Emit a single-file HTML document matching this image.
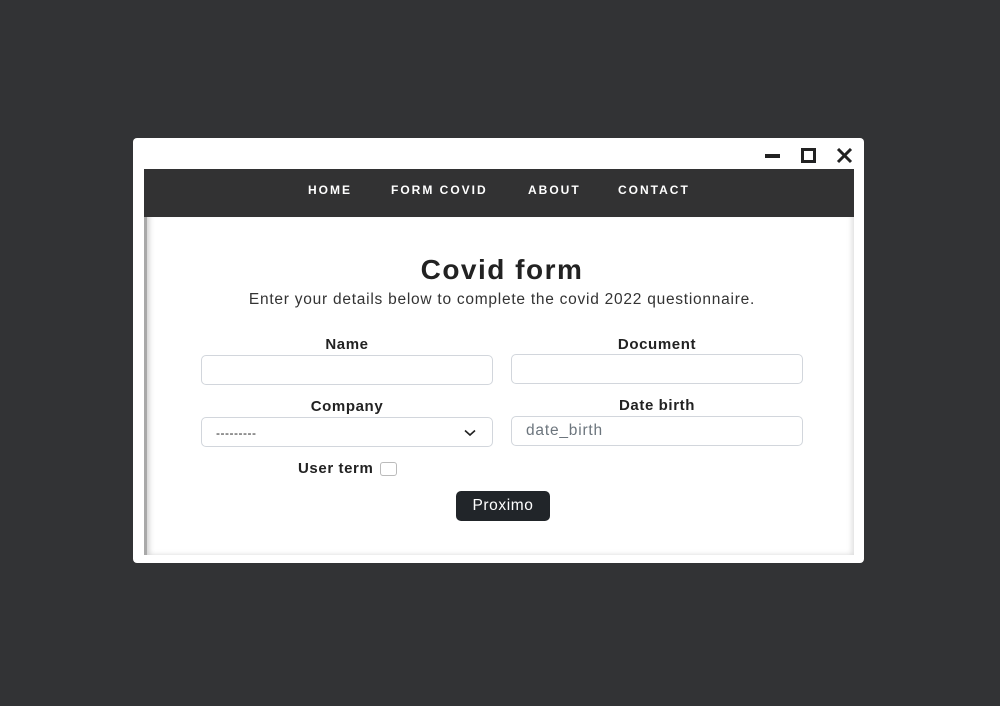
<!DOCTYPE html>
<html><head><meta charset="utf-8"><style>
*{box-sizing:border-box;margin:0;padding:0}
body{width:1000px;height:706px;background:#323335;position:relative;overflow:hidden;font-family:"Liberation Sans",Arial,sans-serif}
.win{position:absolute;left:133px;top:138px;width:731px;height:425px;background:#fff;border-radius:4px}
.ctl{position:absolute;top:148px;height:16px}
.nav{position:absolute;left:144px;top:169px;width:710px;height:48px;background:#323233}
.nav span{position:absolute;top:14px;color:#fff;font-weight:bold;font-size:12px;letter-spacing:2px}
.content{position:absolute;left:144px;top:217px;width:710px;height:338px;background:#fff;border-left:3px solid #a9a9a9;box-shadow:inset 6px 0 6px -4px #ccc, inset -6px -4px 6px -4px #ddd}
h1{position:absolute;left:144px;width:716px;top:254px;text-align:center;font-size:28px;letter-spacing:1.5px;font-weight:bold;color:#222}
.sub{position:absolute;left:144px;width:716px;top:291px;text-align:center;font-size:15.5px;letter-spacing:0.75px;color:#333}
.lbl{position:absolute;font-size:15px;letter-spacing:0.6px;font-weight:bold;color:#222;text-align:center;width:292px}
.inp{position:absolute;width:292px;height:30px;border:1px solid #d2d6dc;border-radius:5px;background:#fff;font-size:15.5px;letter-spacing:0.8px;color:#6c757d;padding:5px 14px}
.btn{position:absolute;left:456px;top:491px;width:94px;height:30px;background:#212529;border-radius:5px;color:#fff;font-size:15.5px;letter-spacing:0.6px;text-align:center;line-height:30px}
</style></head><body>
<div class="win"></div>
<svg class="ctl" style="left:764px" width="18" height="16"><rect x="1" y="6" width="15" height="4" fill="#222"/></svg>
<svg class="ctl" style="left:800px" width="18" height="16"><rect x="2.5" y="1.5" width="12" height="12" fill="none" stroke="#222" stroke-width="3"/></svg>
<svg class="ctl" style="left:836px" width="18" height="16"><path d="M2 1L15 14M15 1L2 14" stroke="#222" stroke-width="3"/></svg>
<div class="nav">
<span style="left:164px">HOME</span>
<span style="left:247px">FORM COVID</span>
<span style="left:384px">ABOUT</span>
<span style="left:474px">CONTACT</span>
</div>
<div class="content"></div>
<h1>Covid form</h1>
<div class="sub">Enter your details below to complete the covid 2022 questionnaire.</div>
<div class="lbl" style="left:201px;top:336px">Name</div>
<div class="lbl" style="left:511px;top:336px">Document</div>
<div class="inp" style="left:201px;top:355px"></div>
<div class="inp" style="left:511px;top:354px"></div>
<div class="lbl" style="left:201px;top:398px">Company</div>
<div class="lbl" style="left:511px;top:397px">Date birth</div>
<div class="inp" style="left:201px;top:417px;color:#222;font-size:12px;letter-spacing:0.5px;padding-top:8px">---------
<svg style="position:absolute;right:16px;top:11px" width="12" height="8"><path d="M1 1.5L6 6L11 1.5" fill="none" stroke="#222" stroke-width="1.6"/></svg></div>
<div class="inp" style="left:511px;top:416px">date_birth</div>
<div class="lbl" style="left:298px;top:460px;width:auto">User term</div>
<div style="position:absolute;left:380px;top:462px;width:17px;height:14px;border:1px solid #bbb;border-radius:3px"></div>
<div class="btn">Proximo</div>
</body></html>
